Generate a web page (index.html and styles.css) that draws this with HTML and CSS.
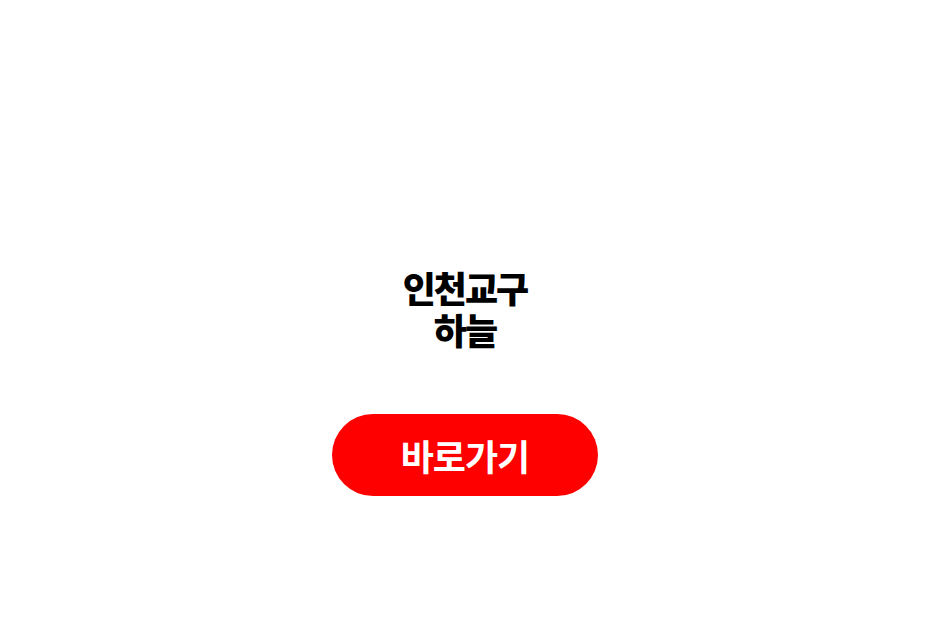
FILE: index.html
```html
<!DOCTYPE html>
<html lang="ko">
<head>
  <meta charset="UTF-8"/>
  <meta name="viewport" content="width=device-width, initial-scale=1.0"/>
  <title>인천교구 하늘</title>
  <link rel="stylesheet" href="styles.css">
</head>
<body>
  <div class="intro">
    <h1 class="title">
      <span class="line">인천교구</span>
      <span class="line">하늘</span>
    </h1>
    <a class="go-btn" href="#">바로가기</a>
  </div>
</body>
</html>
```

FILE: styles.css
```css
html, body {
  margin: 0;
  height: 100%;
  background: #fff;
}
body {
  font-family: "Noto Sans CJK KR", "Noto Sans", sans-serif;
}

.intro {
  display: flex;
  flex-direction: column;
  align-items: center;
  padding-top: 266px;
}

.title {
  margin: 0;
  font-size: 36px;
  font-weight: 900;
  line-height: 42px;
  letter-spacing: -2px;
  color: #000;
  text-align: center;
}
.title .line {
  display: block;
}

.go-btn {
  display: flex;
  align-items: center;
  justify-content: center;
  width: 266px;
  height: 82px;
  margin-top: 64px;
  border-radius: 41px;
  background: #ff0000;
  color: #fff;
  font-size: 36px;
  font-weight: 700;
  letter-spacing: -1px;
  text-decoration: none;
}
```
